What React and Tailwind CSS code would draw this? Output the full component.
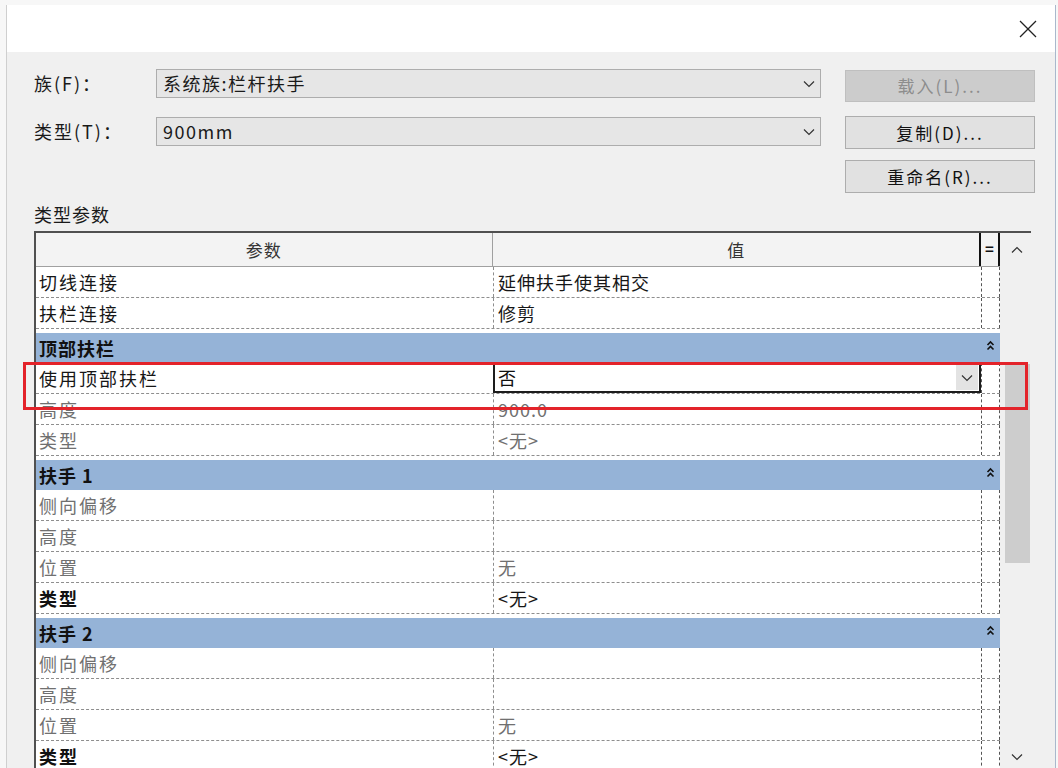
// 类型属性对话框 (栏杆扶手)

const FONT = { fontFamily: '"Noto Sans CJK SC", "Liberation Sans", sans-serif' };

const rows = [
  { kind: "row", label: "切线连接", value: "延伸扶手使其相交" },
  { kind: "row", label: "扶栏连接", value: "修剪" },
  { kind: "group", label: "顶部扶栏" },
  { kind: "row", label: "使用顶部扶栏", value: "否", combo: true },
  { kind: "row", label: "高度", value: "900.0", muted: true },
  { kind: "row", label: "类型", value: "<无>", muted: true },
  { kind: "group", label: "扶手 1" },
  { kind: "row", label: "侧向偏移", value: "", muted: true },
  { kind: "row", label: "高度", value: "", muted: true },
  { kind: "row", label: "位置", value: "无", muted: true },
  { kind: "row", label: "类型", value: "<无>", bold: true },
  { kind: "group", label: "扶手 2" },
  { kind: "row", label: "侧向偏移", value: "", muted: true },
  { kind: "row", label: "高度", value: "", muted: true },
  { kind: "row", label: "位置", value: "无", muted: true },
  { kind: "row", label: "类型", value: "<无>", bold: true },
];

function Chevron({ className = "" }) {
  return (
    <svg width="12" height="8" viewBox="0 0 12 8" className={className}>
      <polyline points="1,1.5 6,6.5 11,1.5" fill="none" stroke="#333" strokeWidth="1.2" />
    </svg>
  );
}

function Collapse() {
  return (
    <svg width="9" height="11" viewBox="0 0 9 11">
      <polyline points="1.5,5 4.5,2 7.5,5" fill="none" stroke="#111" strokeWidth="1.6" />
      <polyline points="1.5,9.5 4.5,6.5 7.5,9.5" fill="none" stroke="#111" strokeWidth="1.6" />
    </svg>
  );
}

function CloseIcon() {
  return (
    <svg width="18" height="18" viewBox="0 0 18 18">
      <line x1="1" y1="1" x2="17" y2="17" stroke="#222" strokeWidth="1.3" />
      <line x1="17" y1="1" x2="1" y2="17" stroke="#222" strokeWidth="1.3" />
    </svg>
  );
}

function Combo({ text, className = "" }) {
  return (
    <div
      className={`flex items-center justify-between h-[29px] w-[665px] border border-[#adadad] bg-[#e6e6e6] pl-[6px] pr-[5px] ${className}`}
    >
      <span className="text-[18px] tracking-[1.5px] text-[#1a1a1a]">{text}</span>
      <Chevron />
    </div>
  );
}

function Btn({ children, disabled, className = "" }) {
  return (
    <div
      className={`flex items-center justify-center w-[190px] h-[32px] border text-[17px] tracking-[2px] ${
        disabled
          ? "bg-[#cccccc] border-[#bfbfbf] text-[#8d8d8d]"
          : "bg-[#e1e1e1] border-[#adadad] text-[#111]"
      } ${className}`}
    >
      {children}
    </div>
  );
}

function DataRow({ row }) {
  const labelCls = row.bold
    ? "font-bold text-[#111]"
    : row.muted
    ? "text-[#707070]"
    : "text-[#161616]";
  const valueCls = row.muted ? "text-[#707070]" : "text-[#161616]";
  return (
    <div className="flex h-[31px] border-b border-dashed border-[#8e8e8e] bg-white">
      <div className={`w-[457px] flex items-center pl-[3px] text-[18px] tracking-[2px] ${labelCls}`}>
        {row.label}
      </div>
      {row.combo ? (
        <div className="w-[488px] flex">
          <div className="flex-1 flex items-center justify-between border-l-2 border-r-2 border-b-2 border-t border-[#1d1d1d] bg-white pl-[3px] pr-[1px]">
            <span className="text-[18px] text-[#111]">{row.value}</span>
            <div className="w-[22px] h-[25px] bg-[#e3e3e3] flex items-center justify-center">
              <Chevron />
            </div>
          </div>
        </div>
      ) : (
        <div
          className={`w-[488px] flex items-center pl-[4px] border-l border-dashed border-[#8e8e8e] text-[18px] tracking-[1px] ${valueCls}`}
        >
          {row.value}
        </div>
      )}
      <div className="w-[19px] border-l border-r border-dashed border-[#555]" />
    </div>
  );
}

function GroupRow({ label }) {
  return (
    <div className="pt-[4px] bg-white">
      <div className="flex items-center h-[30px] bg-[#95b3d7]">
        <div className="flex-1 pl-[3px] text-[18px] font-bold tracking-[1px] text-[#111]">{label}</div>
        <div className="w-[19px] flex justify-center pb-[6px]">
          <Collapse />
        </div>
      </div>
    </div>
  );
}

export default function App() {
  return (
    <div className="relative w-[1058px] h-[768px] overflow-hidden bg-[#f7f7f7] pt-[5px] pl-[6px]" style={FONT}>
      <div className="w-[1050px] h-[800px] border-l border-r border-l-[#cfcfcf] border-r-[#a9b8cc] flex flex-col">
        {/* 标题栏 */}
        <div className="h-[47px] bg-white flex items-center justify-end pr-[18px] shrink-0">
          <CloseIcon />
        </div>

        <div className="flex-1 bg-[#f0f0f0] pl-[27px] pt-[17px]">
          {/* 族 */}
          <div className="flex items-start h-[32px]">
            <div className="w-[122px] h-[29px] flex items-center text-[18px] tracking-[2px] text-[#1a1a1a]">
              族(F)：
            </div>
            <Combo text="系统族:栏杆扶手" />
            <Btn disabled className="ml-[24px] mt-[1px]">载入(L)...</Btn>
          </div>

          {/* 类型 */}
          <div className="flex items-start h-[33px] mt-[15px]">
            <div className="w-[122px] h-[29px] mt-[1px] flex items-center text-[18px] tracking-[2px] text-[#1a1a1a]">
              类型(T)：
            </div>
            <Combo text="900mm" className="mt-[1px] h-[28px]" />
            <Btn className="ml-[24px] h-[33px]">复制(D)...</Btn>
          </div>

          <div className="flex h-[33px] mt-[11px]">
            <Btn className="ml-[811px] h-[33px]">重命名(R)...</Btn>
          </div>

          <div className="mt-[9px] h-[24px] flex items-center text-[18px] tracking-[1px] text-[#1a1a1a]">
            类型参数
          </div>

          {/* 参数表 */}
          <div className="mt-[5px] w-[997px] flex border-t-2 border-[#505050]">
            <div className="w-[966px] border-l-2 border-[#505050]">
              <div className="flex h-[34px] bg-[#f3f3f3] border-b border-[#a0a0a0]">
                <div className="w-[457px] flex items-center justify-center border-r border-[#a0a0a0] text-[17px] tracking-[1px] text-[#333]">
                  参数
                </div>
                <div className="w-[487px] flex items-center justify-center text-[17px] text-[#333]">
                  值
                </div>
                <div className="w-[21px] flex items-center justify-center border-l-2 border-r-2 border-[#111] text-[15px] font-bold text-[#111]">
                  =
                </div>
              </div>
              {rows.map((row, i) =>
                row.kind === "group" ? (
                  <GroupRow key={i} label={row.label} />
                ) : (
                  <DataRow key={i} row={row} />
                )
              )}
            </div>

            {/* 滚动条 */}
            <div className="w-[31px] bg-[#f0f0f0] flex flex-col">
              <div className="h-[34px] flex items-center justify-center pl-[2px]">
                <Chevron className="rotate-180" />
              </div>
              <div className="mt-[97px] ml-[5px] w-[25px] h-[199px] bg-[#cdcdcd]" />
              <div className="mt-[190px] flex justify-center pl-[2px]">
                <Chevron />
              </div>
            </div>
          </div>
        </div>
      </div>

      {/* 红色标注框 */}
      <div className="absolute left-[23px] top-[362px] w-[1005px] h-[48px] border-[3px] border-[#e3232a]" />
    </div>
  );
}
